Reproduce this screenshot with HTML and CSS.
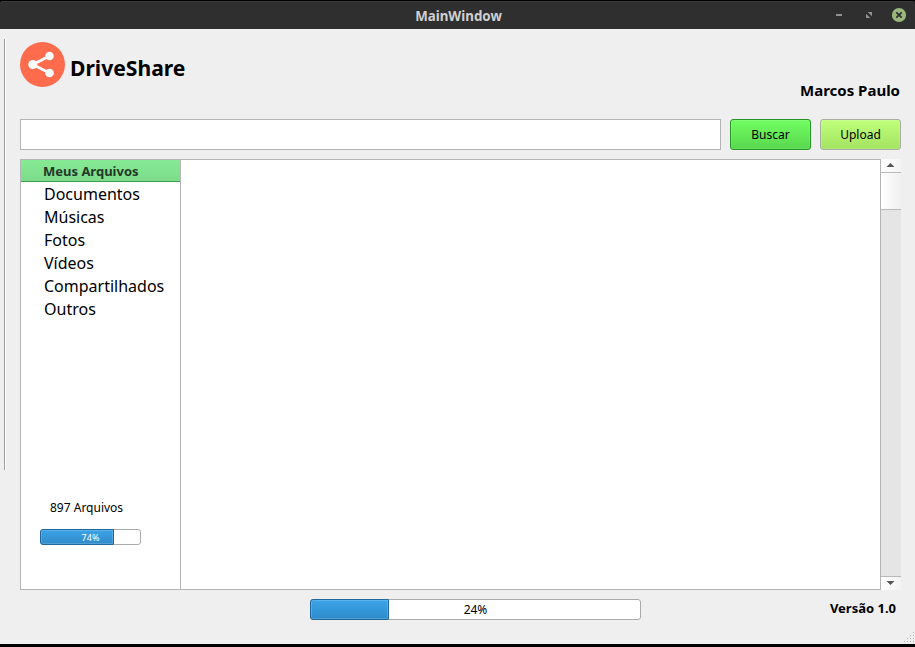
FILE: index.html
```html
<!DOCTYPE html>
<html lang="pt">
<head>
<meta charset="utf-8">
<title>MainWindow</title>
<link rel="stylesheet" href="styles.css">
</head>
<body>
<div class="window">
  <header class="titlebar">
    <span class="window-title">MainWindow</span>
    <svg class="window-controls" width="76" height="28" viewBox="0 0 76 28">
      <rect x="3" y="13" width="6" height="2" fill="#929292"/>
      <path d="M34.7 11h4.3v4.3z M33 12.7v4.3h4.3z" fill="#929292"/>
      <circle cx="66" cy="14" r="7.1" fill="#9ab87c"/>
      <path d="M63.3 11.3l5.4 5.4M68.7 11.3l-5.4 5.4" stroke="#2f2f2f" stroke-width="1.8"/>
    </svg>
  </header>
  <div class="body">
    <div class="side-line"></div>
    <main class="content">
      <div class="brand-row">
        <svg class="logo" width="45" height="45" viewBox="0 0 45 45">
          <circle cx="22.5" cy="22.5" r="22.5" fill="#ff6b4d"/>
          <path d="M29.5 14L12.8 22.5L29.5 31" fill="none" stroke="#fff" stroke-width="2.8"/>
          <circle cx="29.5" cy="14" r="4.3" fill="#fff"/>
          <circle cx="12.8" cy="22.5" r="4.5" fill="#fff"/>
          <circle cx="29.5" cy="31" r="4.3" fill="#fff"/>
        </svg>
        <h1 class="brand">DriveShare</h1>
        <span class="user">Marcos Paulo</span>
      </div>
      <div class="search-row">
        <input class="search" type="text" aria-label="Buscar">
        <button class="btn btn-search">Buscar</button>
        <button class="btn btn-upload">Upload</button>
      </div>
      <div class="panel">
        <aside class="sidebar">
          <div class="list-header">Meus Arquivos</div>
          <ul class="list">
            <li>Documentos</li>
            <li>Músicas</li>
            <li>Fotos</li>
            <li>Vídeos</li>
            <li>Compartilhados</li>
            <li>Outros</li>
          </ul>
          <div class="count">897 Arquivos</div>
          <div class="progress small"><div class="fill" style="width:74px"></div><span class="label">74%</span></div>
        </aside>
        <section class="files"></section>
        <div class="scrollbar">
          <div class="arrow"><svg width="20" height="13"><path d="M5.5 8h8L9.5 4z" fill="#555"/></svg></div>
          <div class="thumb"></div>
          <div class="track"></div>
          <div class="arrow arrow-down"><svg width="20" height="13"><path d="M5.5 4h8L9.5 8z" fill="#555"/></svg></div>
        </div>
      </div>
      <footer class="footer">
        <div class="progress large"><div class="fill" style="width:79px"></div><span class="label">24%</span></div>
        <span class="version">Versão 1.0</span>
      </footer>
    </main>
    <svg class="grip" width="12" height="12" viewBox="0 0 12 12" fill="#b5b5b5">
      <path d="M10 1h1v1h-1zM7 4h1v1h-1zM10 4h1v1h-1zM4 7h1v1h-1zM7 7h1v1h-1zM10 7h1v1h-1zM1 10h1v1h-1zM4 10h1v1h-1zM7 10h1v1h-1zM10 10h1v1h-1z"/>
    </svg>
  </div>
</div>
</body>
</html>
```
FILE: styles.css
```css
* { box-sizing: border-box; }

body {
  margin: 0;
  font-family: "Noto Sans", sans-serif;
  font-size: 12px;
  color: #000;
  background: #000;
}

.window {
  display: flex;
  flex-direction: column;
  width: 915px;
  height: 647px;
  padding: 1px 0 3px;
  background: #000;
  overflow: hidden;
}

.titlebar {
  display: grid;
  grid-template-columns: 82px 1fr 82px;
  align-items: center;
  height: 28px;
  background: #2f2f2f;
  border-radius: 3px 3px 0 0;
  box-shadow: inset 0 1px #3a3a3a;
}

.window-title {
  grid-column: 2;
  padding: 2px 0 0 2px;
  text-align: center;
  font-size: 13.33px;
  font-weight: 700;
  line-height: 26px;
  color: #d0d0d0;
}

.window-controls { justify-self: start; }

.body {
  position: relative;
  display: flex;
  flex: 1;
  background: #efefef;
}

.side-line {
  width: 2px;
  height: 431px;
  margin: 10px 14px 0 4px;
  border-left: 1px solid #9e9e9e;
  border-right: 1px solid #fff;
}

.content { width: 881px; }

.brand-row {
  display: flex;
  height: 90px;
  padding: 13px 1px 0 0;
}

.brand {
  margin: 11px 0 0 5px;
  font-size: 21.1px;
  line-height: 30px;
}

.user {
  margin: 38px 0 0 auto;
  font-size: 15px;
  font-weight: 700;
  line-height: 20px;
}

.search-row {
  display: flex;
  gap: 9px;
  height: 31px;
}

.search {
  flex: 1;
  min-width: 0;
  border: 1px solid #b4b4b4;
  background: #fff;
}

.btn {
  width: 81px;
  padding: 0;
  font: 12px "Noto Sans", sans-serif;
  color: #000;
  border-radius: 3px;
}

.btn-search {
  border: 1px solid #269326;
  background: linear-gradient(#72fd62, #59d84e);
  box-shadow: inset 0 0 0 1px rgba(255, 255, 255, .1);
}

.btn-upload {
  border: 1px solid #a9aea2;
  background: linear-gradient(#c0ff7a, #a4e362);
  box-shadow: inset 0 0 0 1px rgba(255, 255, 255, .15);
}

.panel {
  display: flex;
  height: 431px;
  margin-top: 9px;
}

.sidebar {
  width: 161px;
  border: 1px solid #b4b4b4;
  background: #fff;
}

.list-header {
  height: 22px;
  padding-left: 22px;
  font-size: 13px;
  font-weight: 700;
  line-height: 22px;
  color: #24382a;
  background: linear-gradient(#86ea94, #7cdc8a);
  border-bottom: 1px solid #3f9c50;
}

.list {
  height: 314px;
  margin: 0;
  padding: 1px 0 0 23px;
  list-style: none;
  font-size: 16px;
  line-height: 23px;
}

.count {
  height: 33px;
  padding-left: 29px;
  line-height: 23px;
}

.files {
  flex: 1;
  border: 1px solid #b4b4b4;
  border-left: 0;
  background: #fff;
}

.scrollbar {
  display: flex;
  flex-direction: column;
  width: 20px;
  background: #e5e5e5;
}

.arrow {
  height: 14px;
  background: linear-gradient(90deg, #fff, #f3f3f3);
  border-bottom: 1px solid #b9b9b9;
}

.arrow svg { display: block; }

.arrow-down {
  border-top: 1px solid #b9b9b9;
  border-bottom: 0;
}

.thumb {
  height: 37px;
  background: linear-gradient(90deg, #fff, #f0f0f0);
  border-bottom: 1px solid #b9b9b9;
}

.track { flex: 1; }

.progress {
  display: grid;
  border: 1px solid #aaa;
  border-radius: 3px;
  background: #fff;
}

.fill,
.label { grid-area: 1 / 1; }

.fill {
  margin: -1px;
  border: 1px solid #20679b;
  border-radius: 3px 1px 1px 3px;
  background: linear-gradient(#3ba4e8, #2f8bc9);
  box-shadow: inset 0 0 0 1px rgba(255, 255, 255, .17);
}

.label {
  align-self: center;
  text-align: center;
}

.small {
  width: 101px;
  height: 16px;
  margin-left: 19px;
}

.small .label {
  padding-top: 2px;
  font-size: 9px;
  line-height: 12px;
  color: #fff;
}

.large {
  width: 331px;
  height: 21px;
  margin-left: 290px;
}

.large .label { line-height: 19px; }

.footer {
  display: flex;
  justify-content: space-between;
  margin-top: 9px;
  padding-right: 5px;
}

.version {
  font-size: 13px;
  font-weight: 700;
  line-height: 19px;
}

.grip {
  position: absolute;
  right: 0;
  bottom: 1px;
}
```
